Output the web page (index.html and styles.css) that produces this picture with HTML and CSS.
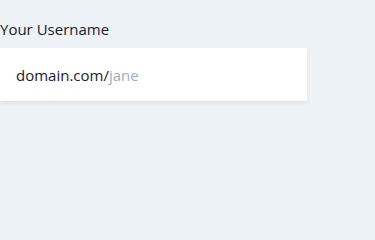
FILE: index.html
```html
<!DOCTYPE html>
<html>
<head>
<meta charset="utf-8">
<link rel="stylesheet" href="styles.css">
</head>
<body>
<div class="field">
  <label class="label">Your Username</label>
  <div class="input">
    <span class="prefix">domain.com/</span><span class="placeholder">jane</span>
  </div>
</div>
</body>
</html>
```
FILE: styles.css
```css
html, body {
  margin: 0;
  padding: 0;
  background: #edf2f7;
  height: 100%;
}
body {
  font-family: "Open Sans", "Noto Sans", sans-serif;
  color: #1a202c;
}
.field {
  width: 307px;
  padding-top: 18px;
}
.label {
  display: block;
  font-size: 15px;
  line-height: 22px;
  margin-bottom: 8px;
}
.input {
  background: #fff;
  height: 53px;
  box-sizing: border-box;
  padding: 0 16px;
  display: flex;
  align-items: center;
  font-size: 15px;
  box-shadow: 0 2px 4px rgba(0,0,0,0.08);
}
.placeholder {
  color: #a0aec0;
}
```
